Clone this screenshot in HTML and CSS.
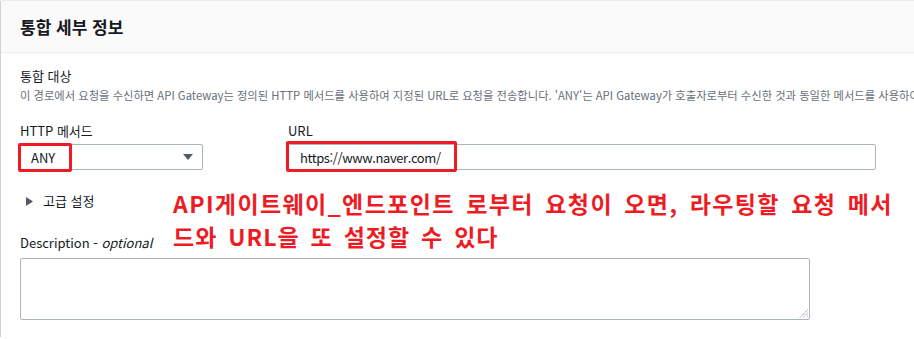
FILE: index.html
```html
<!DOCTYPE html>
<html lang="ko">
<head>
<meta charset="utf-8">
<title>통합 세부 정보</title>
<link rel="stylesheet" href="styles.css">
</head>
<body>
<section class="card">
  <header class="card-header">
    <h2 class="card-title">통합 세부 정보</h2>
  </header>
  <div class="card-body">
    <div class="target">
      <div class="label">통합 대상</div>
      <div class="desc">이 경로에서 요청을 수신하면 API Gateway는 정의된 HTTP 메서드를 사용하여 지정된 URL로 요청을 전송합니다. 'ANY'는 API Gateway가 호출자로부터 수신한 것과 동일한 메서드를 사용하여 요청을 전송합니다.</div>
    </div>
    <div class="row">
      <div class="field field-method">
        <div class="label">HTTP 메서드</div>
        <div class="control select">
          <span class="select-value">ANY</span>
          <svg class="select-arrow" width="10" height="6" viewBox="0 0 10 6"><path d="M0 0H10L5 6Z" fill="#545b64"/></svg>
          <span class="mark mark-any"></span>
        </div>
      </div>
      <div class="field field-url">
        <div class="label">URL</div>
        <div class="control input">
          <span class="input-value">https://www.naver.com/</span>
          <span class="mark mark-url"></span>
        </div>
      </div>
    </div>
    <div class="expander">
      <svg class="caret" width="7" height="9" viewBox="0 0 7 9"><path d="M0 0L7 4.5L0 9Z" fill="#545b64"/></svg>
      <span>고급 설정</span>
    </div>
    <div class="field field-desc">
      <div class="label">Description - <em>optional</em></div>
      <div class="textarea">
        <svg class="grip" width="9" height="9" viewBox="0 0 9 9"><path d="M8.5 1L1 8.5M8.5 4L4 8.5M8.5 7L7 8.5" stroke="#5f6b7a" stroke-width="1" stroke-dasharray="1 1"/></svg>
      </div>
    </div>
  </div>
  <p class="note"><span class="note-line note-line-1">API게이트웨이_엔드포인트 로부터 요청이 오면, 라우팅할 요청 메서</span><span class="note-line">드와 URL을 또 설정할 수 있다</span></p>
</section>
</body>
</html>
```
FILE: styles.css
```css
html, body {
  margin: 0;
  padding: 0;
  background: #ffffff;
  overflow: hidden;
}
body {
  font-family: "Noto Sans CJK KR", "Noto Sans", sans-serif;
  color: #16191f;
}
.card {
  position: relative;
  width: 960px;
  background: #ffffff;
  border-top: 1px solid #eaeded;
  box-shadow: 0 1px 1px 0 rgba(0, 28, 36, 0.3), 1px 1px 1px 0 rgba(0, 28, 36, 0.15), -1px 1px 1px 0 rgba(0, 28, 36, 0.15);
  margin-left: 1px;
  height: 337px;
  box-sizing: border-box;
}
.card-header {
  height: 52px;
  box-sizing: border-box;
  background: #fafafa;
  border-bottom: 1px solid #eaeded;
  padding: 0 19px;
  display: flex;
  align-items: center;
}
.card-title {
  margin: 0;
  font-size: 17px;
  font-weight: 700;
  line-height: 20px;
  color: #16191f;
}
.card-body {
  padding: 13px 19px 0;
}
.label {
  font-size: 13px;
  line-height: 20px;
  color: #16191f;
}
.label em {
  font-style: italic;
}
.desc {
  font-size: 11.3px;
  line-height: 18px;
  color: #687078;
  white-space: nowrap;
}
.row {
  display: flex;
  gap: 85px;
  margin-top: 17px;
}
.field-method {
  width: 183px;
}
.field-url {
  width: 588px;
}
.control {
  position: relative;
  margin-top: 3px;
  height: 26px;
  box-sizing: border-box;
  border: 1px solid #aab7b8;
  border-radius: 2px;
  display: flex;
  align-items: center;
  font-size: 13px;
}
.select {
  justify-content: space-between;
  padding: 0 9px 0 10px;
}
.input {
  padding: 0 11px;
  letter-spacing: -0.4px;
}
.mark {
  position: absolute;
  border: 3px solid #ed1c24;
  border-radius: 2px;
  box-sizing: border-box;
}
.mark-any {
  left: -3px;
  top: -2px;
  width: 54px;
  height: 29px;
}
.mark-url {
  left: -3px;
  top: -4px;
  width: 171px;
  height: 31px;
}
.expander {
  margin-top: 21px;
  margin-left: 6px;
  display: flex;
  align-items: center;
  gap: 10px;
  font-size: 13px;
  line-height: 20px;
}
.field-desc {
  margin-top: 22px;
}
.textarea {
  position: relative;
  margin-top: 5px;
  width: 790px;
  height: 62px;
  box-sizing: border-box;
  border: 1px solid #aab7b8;
  border-radius: 2px;
}
.grip {
  position: absolute;
  right: 1px;
  bottom: 1px;
}
.note {
  position: absolute;
  left: 172px;
  top: 186px;
  margin: 0;
  font-size: 23px;
  font-weight: 700;
  line-height: 33px;
  letter-spacing: 1px;
  word-spacing: 3.5px;
  color: #ed1c24;
  white-space: nowrap;
}
.note-line {
  display: block;
}
.note-line-1 {
  letter-spacing: 1.4px;
}
```
